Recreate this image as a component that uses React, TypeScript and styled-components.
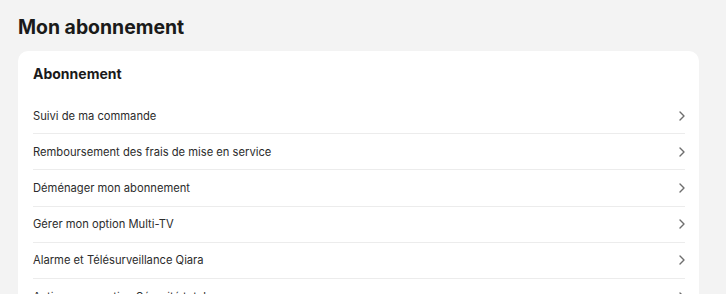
import React from "react";
import styled, { createGlobalStyle } from "styled-components";

const Global = createGlobalStyle`
  html, body { margin: 0; padding: 0; }
  body {
    background: #f3f3f3;
    font-family: Inter, "Open Sans", "Liberation Sans", sans-serif;
    color: #1f1f1f;
  }
`;

const Page = styled.main`
  padding: 14px 27px 0 18px;
  display: flex;
  flex-direction: column;
`;

const Title = styled.h1`
  margin: 0 0 11px 0;
  font-size: 19.4px;
  line-height: 26px;
  font-weight: 700;
  color: #1a1a1a;
`;

const Card = styled.section`
  background: #ffffff;
  border-radius: 10px;
  padding: 12px 14px 0 15px;
  display: flex;
  flex-direction: column;
`;

const CardTitle = styled.h2`
  margin: 0;
  font-size: 14px;
  line-height: 22px;
  font-weight: 700;
  color: #1a1a1a;
  padding-bottom: 13px;
`;

const List = styled.ul`
  list-style: none;
  margin: 0;
  padding: 0;
`;

const Row = styled.li`
  display: flex;
  align-items: center;
  justify-content: space-between;
  height: 35.2px;
  border-bottom: 1px solid #ececec;
  font-size: 11.2px;
  color: #2c2c2c;
  cursor: pointer;
`;

const Chevron = styled.svg`
  width: 6px;
  height: 10px;
  flex: none;
`;

const items = [
  "Suivi de ma commande",
  "Remboursement des frais de mise en service",
  "Déménager mon abonnement",
  "Gérer mon option Multi-TV",
  "Alarme et Télésurveillance Qiara",
  "Activer mon option Sécurité totale",
];

export default function App() {
  return (
    <>
      <Global />
      <Page>
        <Title>Mon abonnement</Title>
        <Card>
          <CardTitle>Abonnement</CardTitle>
          <List>
            {items.map((t) => (
              <Row key={t}>
                <span>{t}</span>
                <Chevron viewBox="0 0 6 10" fill="none">
                  <path d="M1 1l4 4-4 4" stroke="#6e6e6e" strokeWidth="1.4" strokeLinecap="round" strokeLinejoin="round" />
                </Chevron>
              </Row>
            ))}
          </List>
        </Card>
      </Page>
    </>
  );
}
